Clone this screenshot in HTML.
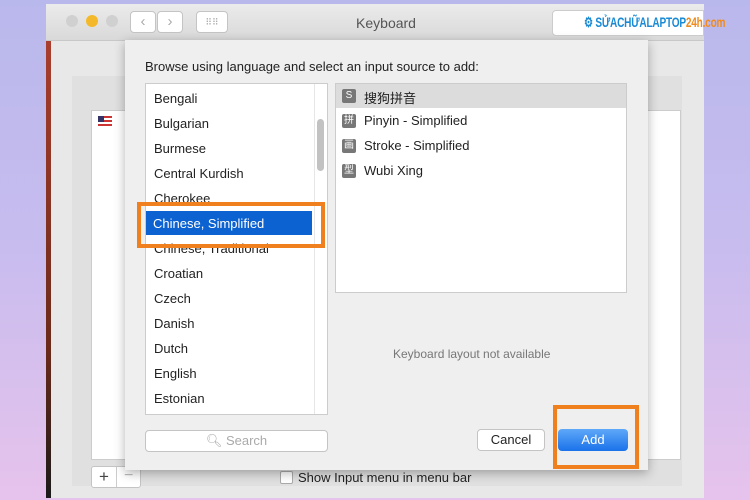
<!DOCTYPE html>
<html><head><meta charset="utf-8"><style>
*{margin:0;padding:0;box-sizing:border-box}
body{width:750px;height:500px;overflow:hidden;position:relative;font-family:"Liberation Sans","Noto Sans CJK SC",sans-serif;background:linear-gradient(#b9b8ec,#c8bcee 50%,#e6c3ec);}
.abs{position:absolute}
.win{left:46px;top:4px;width:658px;height:494px;background:#e8e8e8;}
.title{left:0;top:0;width:658px;height:37px;background:linear-gradient(#ebebeb,#d9d9d9);border-bottom:1px solid #c8c8c8}
.li{position:absolute;left:8px;font-size:13px;color:#222}
.ri{position:absolute;left:28px;font-size:13px;color:#222}
.ic{position:absolute;left:6px;width:14px;height:14px;background:#777;border-radius:2px;color:#fff;font-size:10px;line-height:14px;text-align:center}
.btn{background:#fff;border:1px solid #c4c4c4;border-radius:4px}
</style></head><body>
<div class="abs win">
 <div class="abs" style="left:0;top:0;width:5px;height:494px;background:linear-gradient(#b04030,#6a2a1a 70%,#1a1a1a)"></div>
 <div class="abs title">
  <div class="abs" style="left:20px;top:11px;width:12px;height:12px;border-radius:6px;background:#d0d0d0"></div>
  <div class="abs" style="left:40px;top:11px;width:12px;height:12px;border-radius:6px;background:#f4b92a"></div>
  <div class="abs" style="left:60px;top:11px;width:12px;height:12px;border-radius:6px;background:#d0d0d0"></div>
  <div class="abs btn" style="left:84px;top:7px;width:26px;height:22px;color:#aaa;text-align:center;font-size:15px;line-height:20px">‹</div>
  <div class="abs btn" style="left:111px;top:7px;width:26px;height:22px;color:#aaa;text-align:center;font-size:15px;line-height:20px">›</div>
  <div class="abs btn" style="left:150px;top:7px;width:32px;height:22px;color:#aaa;text-align:center;font-size:9px;line-height:20px">⠿⠿</div>
  <div class="abs" style="left:290px;top:11px;width:100px;text-align:center;font-size:14px;color:#555">Keyboard</div>
  <div class="abs" style="left:506px;top:6px;width:152px;height:26px;background:#fff;border-radius:4px 0 0 4px;border:1px solid #ccc"></div>
  <div class="abs" style="left:538px;top:10px;font-size:14px;font-weight:bold;color:#1a8ad4;white-space:nowrap;transform:scaleX(0.72);transform-origin:left top;letter-spacing:-0.3px">⚙ SỬACHỮALAPTOP<span style="color:#f08a1c">24h.com</span></div>
 </div>
 <div class="abs" style="left:26px;top:72px;width:610px;height:410px;background:#e0e0e0"></div>
 <div class="abs" style="left:45px;top:106px;width:590px;height:350px;background:#fff;border:1px solid #ccc"></div>
 <div class="abs" style="left:52px;top:112px;width:14px;height:10px;background:linear-gradient(#c33 0 20%,#fff 20% 40%,#c33 40% 60%,#fff 60% 80%,#c33 80%)"><div style="width:6px;height:6px;background:#336"></div></div>
 <div class="abs btn" style="left:45px;top:462px;width:50px;height:22px;border-radius:3px"><span class="abs" style="left:7px;top:0;font-size:17px;color:#444">+</span><span class="abs" style="left:24px;top:0;height:20px;border-left:1px solid #ccc"></span><span class="abs" style="left:32px;top:0;font-size:16px;color:#bbb">−</span></div>
 <div class="abs" style="left:234px;top:467px;width:13px;height:13px;background:#fff;border:1px solid #aaa;border-radius:2px"></div>
 <div class="abs" style="left:252px;top:466px;font-size:13px;color:#222">Show Input menu in menu bar</div>
</div>
<div class="abs" style="left:125px;top:40px;width:523px;height:430px;background:#efefef;box-shadow:0 3px 10px rgba(0,0,0,.3)">
 <div class="abs" style="left:20px;top:19px;font-size:13px;color:#222">Browse using language and select an input source to add:</div>
 <div class="abs" style="left:20px;top:43px;width:183px;height:332px;background:#fff;border:1px solid #ccc;overflow:hidden">
  <div class="abs" style="left:168px;top:0;width:1px;height:332px;background:#e6e6e6"></div>
  <div class="abs" style="left:171px;top:35px;width:7px;height:52px;background:#c2c2c2;border-radius:4px"></div>
  <div class="li" style="top:7px">Bengali</div>
  <div class="li" style="top:32px">Bulgarian</div>
  <div class="li" style="top:57px">Burmese</div>
  <div class="li" style="top:82px">Central Kurdish</div>
  <div class="li" style="top:107px">Cherokee</div>
  <div class="li" style="top:157px">Chinese, Traditional</div>
  <div class="li" style="top:182px">Croatian</div>
  <div class="li" style="top:207px">Czech</div>
  <div class="li" style="top:232px">Danish</div>
  <div class="li" style="top:257px">Dutch</div>
  <div class="li" style="top:282px">English</div>
  <div class="li" style="top:307px">Estonian</div>
 </div>
 <div class="abs" style="left:12px;top:162px;width:188px;height:46px;border:4px solid #f0801e"></div>
 <div class="abs" style="left:21px;top:171px;width:166px;height:24px;background:#0b62d0;color:#fff;font-size:13px;padding:5px 7px">Chinese, Simplified</div>
 <div class="abs" style="left:210px;top:43px;width:292px;height:210px;background:#fff;border:1px solid #ccc">
  <div class="abs" style="left:0;top:0;width:290px;height:24px;background:#dcdcdc"></div>
  <div class="ic" style="top:5px">S</div><div class="ri" style="top:4px">搜狗拼音</div>
  <div class="ic" style="top:30px">拼</div><div class="ri" style="top:29px">Pinyin - Simplified</div>
  <div class="ic" style="top:55px">画</div><div class="ri" style="top:54px">Stroke - Simplified</div>
  <div class="ic" style="top:80px">型</div><div class="ri" style="top:79px">Wubi Xing</div>
 </div>
 <div class="abs" style="left:268px;top:307px;font-size:12px;color:#777">Keyboard layout not available</div>
 <div class="abs btn" style="left:20px;top:390px;width:183px;height:22px;color:#aaa;font-size:13px;text-align:center;line-height:20px">&#x1F50D;&#xFE0E; Search</div>
 <div class="abs btn" style="left:352px;top:389px;width:68px;height:22px;font-size:13px;text-align:center;line-height:20px;color:#222">Cancel</div>
 <div class="abs" style="left:428px;top:365px;width:86px;height:64px;border:4px solid #f0801e"></div>
 <div class="abs" style="left:433px;top:389px;width:70px;height:22px;border-radius:4px;background:linear-gradient(#5fa8f8,#1a72ea);color:#fff;font-size:13px;text-align:center;line-height:22px">Add</div>
</div>
</body></html>
